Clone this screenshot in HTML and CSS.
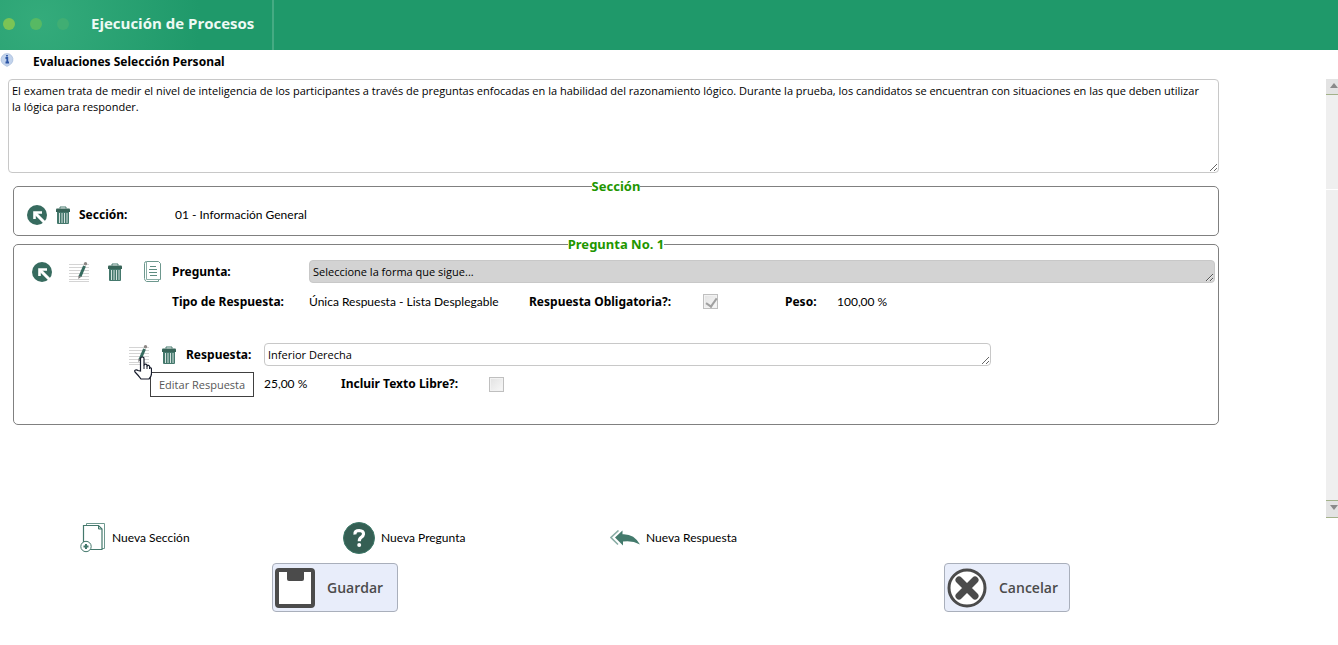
FILE: index.html
```html
<!DOCTYPE html>
<html lang="es">
<head>
    <meta charset="UTF-8">
    <meta name="viewport" content="width=device-width, initial-scale=1.0">
    <title>Ejecución de Procesos</title>
    <link rel="stylesheet" href="styles.css">
</head>
<body>
    <!-- Shared icons -->
    <svg class="icon-defs" aria-hidden="true">
        <symbol id="icon-up" viewBox="0 0 20 20">
            <circle cx="10" cy="10" r="10" fill="#376b5f"/>
            <path d="M7.500 14V7.500h7.500" fill="none" stroke="#fff" stroke-width="2.600"/>
            <path d="M8 8l9.500 9.500" stroke="#fff" stroke-width="3"/>
        </symbol>
        <symbol id="icon-trash" viewBox="0 0 14 18">
            <path d="M4 2.500V1h6v1.500" fill="none" stroke="#44786c" stroke-width="1"/>
            <path d="M0 3.500Q0 2.500 1 2.500h12q1 0 1 1V6H0z" fill="#376458"/>
            <path d="M1 6h12v11q0 1-1 1H2q-1 0-1-1z" fill="#44786c"/>
            <path d="M3.500 7v10M6 7v10M8.500 7v10M11 7v10" stroke="#d5e3df" stroke-width="1"/>
        </symbol>
        <symbol id="icon-edit" viewBox="0 0 20 20">
            <path d="M0 2.500h20M0 5.500h20M0 8.500h20M0 11.500h20M0 14.500h20M0 17.500h20M0 19.500h20" stroke="#d4d4d4" stroke-width="1"/>
            <path d="M15.500 4L11 14.500" stroke="#376b5f" stroke-width="3"/>
            <path d="M9.500 13.500l2.800 1.200L9.300 17z" fill="#777"/>
            <circle cx="16.500" cy="1.800" r="1.700" fill="#8c8785"/>
        </symbol>
        <symbol id="icon-doc" viewBox="0 0 17 21">
            <path d="M2.500.500h12l2 2v16h-2v2h-12q-2-1-2-3v-15q0-2 2-2z" fill="#fff" stroke="#6d988e"/>
            <path d="M2.500 1v17.500H16" fill="none" stroke="#8aada5"/>
            <path d="M6 5.500h6M5 8.500h8M5 11.500h8M6 14.500h7" stroke="#5e8c81"/>
        </symbol>
    </svg>

    <header class="top-bar">
        <span class="dot"></span>
        <span class="dot dot-soft"></span>
        <span class="dot dot-faint"></span>
        <h1>Ejecución de Procesos</h1>
    </header>

    <div class="page-title">
        <svg width="14" height="14" viewBox="0 0 14 14" aria-hidden="true">
            <path d="M7 13.500L4.500 12A6 6 0 1 1 9.500 12z" fill="#c2d3ec" stroke="#a3b8d8" stroke-width=".6"/>
            <path d="M7 2v1.500M5.500 5h1.800v4.500M5.500 9.500h3.500" fill="none" stroke="#2c55a4" stroke-width="1.800"/>
        </svg>
        <h2>Evaluaciones Selección Personal</h2>
    </div>

    <div class="viewer">
        <main class="form">
            <textarea class="description" aria-label="Descripción">El examen trata de medir el nivel de inteligencia de los participantes a través de preguntas enfocadas en la habilidad del razonamiento lógico. Durante la prueba, los candidatos se encuentran con situaciones en las que deben utilizar la lógica para responder.</textarea>

            <fieldset class="group">
                <legend>Sección</legend>
                <div class="row section-row">
                    <button type="button" class="icon-btn" aria-label="Subir"><svg width="20" height="20"><use href="#icon-up"/></svg></button>
                    <button type="button" class="icon-btn" aria-label="Eliminar"><svg width="14" height="18"><use href="#icon-trash"/></svg></button>
                    <strong class="section-label">Sección:</strong>
                    <span>01 - Información General</span>
                </div>
            </fieldset>

            <fieldset class="group question">
                <legend>Pregunta No. 1</legend>
                <div class="row question-row">
                    <div class="tools">
                        <button type="button" class="icon-btn" aria-label="Subir"><svg width="20" height="20"><use href="#icon-up"/></svg></button>
                        <button type="button" class="icon-btn" aria-label="Editar Pregunta"><svg width="20" height="20"><use href="#icon-edit"/></svg></button>
                        <button type="button" class="icon-btn" aria-label="Eliminar"><svg width="14" height="18"><use href="#icon-trash"/></svg></button>
                        <button type="button" class="icon-btn" aria-label="Detalle"><svg width="17" height="21"><use href="#icon-doc"/></svg></button>
                    </div>
                    <label for="pregunta">Pregunta:</label>
                    <textarea id="pregunta" class="line locked" readonly>Seleccione la forma que sigue...</textarea>
                </div>
                <div class="row details-row">
                    <strong>Tipo de Respuesta:</strong>
                    <span>Única Respuesta - Lista Desplegable</span>
                    <label for="obligatoria">Respuesta Obligatoria?:</label>
                    <input type="checkbox" id="obligatoria" checked disabled>
                    <strong>Peso:</strong>
                    <span>100,00 %</span>
                </div>

                <div class="row answer-row">
                    <button type="button" class="icon-btn edit-answer" aria-describedby="tip">
                        <svg width="20" height="20"><use href="#icon-edit"/></svg>
                        <svg class="pointer" width="18" height="24" viewBox="0 0 18 24">
                            <path d="M6.500 15V3q0-2 1.800-2T10 3v6.500q0-1.500 1.500-1.300t1.500 1.300v1q.2-1.200 1.500-1t1.200 1.500v1q1.800-.8 1.800 1.500v4q0 3-2.500 5.500H7Q4.500 19.500 1 16q-.8-1.500.5-2t2.500.500z" fill="#fff" stroke="#161b2b" stroke-width="1.200"/>
                            <path d="M10 9v4M13 10v3M15.500 11.500V13" stroke="#161b2b"/>
                        </svg>
                        <span class="tooltip" id="tip" role="tooltip">Editar Respuesta</span>
                    </button>
                    <button type="button" class="icon-btn" aria-label="Eliminar"><svg width="14" height="18"><use href="#icon-trash"/></svg></button>
                    <label for="respuesta">Respuesta:</label>
                    <textarea id="respuesta" class="line">Inferior Derecha</textarea>
                </div>
                <div class="row weight-row">
                    <span>25,00 %</span>
                    <label for="libre">Incluir Texto Libre?:</label>
                    <input type="checkbox" id="libre" disabled>
                </div>
            </fieldset>
        </main>

        <div class="scroll">
            <button type="button" class="scroll-btn" aria-label="Subir página"><svg width="8" height="5"><path d="M0 5l4-5 4 5z" fill="#8a8a8a"/></svg></button>
            <div class="scroll-thumb"></div>
            <div class="scroll-track"></div>
            <button type="button" class="scroll-btn scroll-down" aria-label="Bajar página"><svg width="8" height="5"><path d="M0 0h8L4 5z" fill="#8a8a8a"/></svg></button>
        </div>
    </div>

    <nav class="links">
        <a href="#">
            <svg width="26" height="30" viewBox="0 0 26 30" aria-hidden="true">
                <path d="M6.500 2.500v-2h18v25h-3" fill="#fff" stroke="#6d988e"/>
                <path d="M3.500 2.500h15l3.500 3.500v20.500H3.500z" fill="#fff" stroke="#44786c" stroke-width="1.200"/>
                <path d="M18.500 2.500V6H22z" fill="#b5cbc6" stroke="#44786c"/>
                <circle cx="6" cy="23.500" r="5.200" fill="#fff" stroke="#44786c"/>
                <path d="M3.500 23.500h5M6 21v5" stroke="#44786c" stroke-width="2"/>
            </svg>
            Nueva Sección
        </a>
        <a href="#">
            <svg width="32" height="32" viewBox="0 0 32 32" aria-hidden="true">
                <circle cx="16" cy="16" r="15.500" fill="#355f54" stroke="#3d7868"/>
                <path d="M12 12.500q-.5-4 4.200-4 4.500.2 4.300 3.600-.2 2-2.300 3.200-2 1.200-1.900 4" fill="none" stroke="#fff" stroke-width="3.200"/>
                <circle cx="16.200" cy="23" r="2" fill="#fff"/>
            </svg>
            Nueva Pregunta
        </a>
        <a href="#">
            <svg width="30" height="16" viewBox="0 0 30 16" aria-hidden="true">
                <path d="M5 7.500L12.500.500v3.700Q24 3.500 30 14.500 22 10 13 11.500v4z" fill="#437a6c"/>
                <path d="M8.500.500L1 7.500l7 7" fill="none" stroke="#8aada5" stroke-width="1.600"/>
            </svg>
            Nueva Respuesta
        </a>
    </nav>

    <div class="actions">
        <button type="button" class="action">
            <svg width="40" height="40" viewBox="0 0 40 40" aria-hidden="true">
                <rect x="2" y="2" width="36" height="36" rx="2" fill="#fff" stroke="#4b4b4b" stroke-width="4"/>
                <path d="M12 3h17v8q0 2-2 2H14q-2 0-2-2z" fill="#4b4b4b"/>
            </svg>
            Guardar
        </button>
        <button type="button" class="action">
            <svg width="40" height="40" viewBox="0 0 40 40" aria-hidden="true">
                <circle cx="20" cy="20" r="18" fill="#fff" stroke="#4b4b4b" stroke-width="3"/>
                <path d="M12 12l16 16M28 12L12 28" stroke="#4b4b4b" stroke-width="7" stroke-linecap="round"/>
            </svg>
            Cancelar
        </button>
    </div>
</body>
</html>
```
FILE: styles.css
```css
:root {
    --green: #1f996a;
    --legend: #1e9600;
    --line: #808080;
    --soft-line: #c8c8c8;
    --ui-font: Lato, sans-serif;
    --field-font: "Open Sans", sans-serif;
    --label-font: "Noto Sans", "Open Sans", sans-serif;
}

* {
    box-sizing: border-box;
}

body {
    margin: 0;
    background: #fff;
    color: #000;
    font-family: var(--ui-font);
    font-size: 12px;
    line-height: 16px;
}

button,
textarea {
    font: inherit;
    color: inherit;
}

h1,
h2 {
    margin: 0;
    font-family: var(--label-font);
}

label,
strong,
legend {
    font-family: var(--label-font);
    font-weight: bold;
}

svg {
    display: block;
    flex: none;
}

.icon-defs {
    position: absolute;
    width: 0;
    height: 0;
}

/* Header */
.top-bar {
    display: flex;
    align-items: center;
    gap: 15px;
    height: 50px;
    padding: 0 0 2px 3px;
    background:
        linear-gradient(#45ab83, #45ab83) 272px 0 / 2px 100% no-repeat,
        radial-gradient(circle at 40px 20px, #34ab7b, var(--green) 160px);
}

.top-bar h1 {
    margin-left: 7px;
    color: #eefaf4;
    font-family: var(--field-font);
    font-size: 15px;
    line-height: 20px;
    padding-bottom: 2px;
}

.dot {
    width: 12px;
    height: 12px;
    border-radius: 50%;
    background: #7bc455;
}

.dot-soft {
    background: #57b963;
}

.dot-faint {
    background: #40ae73;
}

.page-title {
    display: flex;
    gap: 19px;
    height: 29px;
    padding-top: 3px;
}

.page-title h2 {
    font-size: 12px;
    line-height: 18px;
}

/* Scrolling form */
.viewer {
    display: flex;
    height: 439px;
}

.form {
    flex: 1;
    padding: 0 107px 0 8px;
}

textarea {
    display: block;
    margin: 0;
    padding: 3px 8px 3px 3px;
    border: 1px solid var(--soft-line);
    border-radius: 4px;
    background: #fff;
    font-family: var(--field-font);
    font-size: 11px;
    overflow: hidden;
}

.description {
    width: 100%;
    height: 94px;
}

.line {
    flex: 1;
    height: 23px;
}

.locked {
    background: #d3d3d3;
}

.group {
    min-width: 0;
    margin: 5px 0 0 5px;
    padding: 0 3px;
    border: 1px solid var(--line);
    border-radius: 5px;
}

.group + .group {
    margin-top: 0;
}

.group legend {
    margin: 0 auto;
    padding: 0;
    color: var(--legend);
    font-size: 13px;
    line-height: 16px;
}

.row {
    display: flex;
    align-items: center;
    margin-left: 9px;
}

.section-row {
    gap: 9px;
    height: 41px;
    padding-left: 1px;
}

.section-label {
    width: 87px;
}

.question {
    height: 189px;
}

.question-row {
    height: 39px;
}

.tools {
    display: grid;
    grid-template-columns: 37px 39px 36px auto;
    align-items: center;
    justify-items: start;
    width: 146px;
    padding-left: 6px;
}

.question-row label {
    width: 137px;
}

.details-row {
    display: grid;
    grid-template-columns: 137px 220px 174px 82px 52px auto;
    justify-content: start;
    height: 21px;
    padding-left: 146px;
}

.answer-row {
    height: 23px;
    margin-top: 31px;
    padding: 0 224px 0 103px;
}

.answer-row .icon-btn + .icon-btn {
    margin: 0 10px 0 13px;
}

.answer-row label {
    width: 78px;
}

.weight-row {
    display: grid;
    grid-template-columns: 77px 148px auto;
    justify-content: start;
    height: 36px;
    padding-left: 238px;
}

.icon-btn {
    flex: none;
    padding: 0;
    border: 0;
    background: none;
    cursor: pointer;
}

input[type="checkbox"] {
    appearance: none;
    width: 15px;
    height: 15px;
    margin: 0;
    border: 1px solid #bfbfbf;
    background: linear-gradient(135deg, #e2e2e2, #f8f8f8);
    box-shadow: inset 0 0 0 1px #f2f2f2;
}

input[type="checkbox"]:checked::before {
    content: "";
    display: block;
    width: 5px;
    height: 9px;
    margin: 1px 0 0 4px;
    border: solid #a0a0a0;
    border-width: 0 2px 2px 0;
    transform: rotate(35deg);
}

/* Hovered edit icon */
.edit-answer {
    position: relative;
}

.pointer {
    position: absolute;
    top: 11px;
    left: 5px;
    z-index: 2;
}

.tooltip {
    position: absolute;
    top: 27px;
    left: 21px;
    z-index: 1;
    padding: 4px 8px 3px;
    border: 1px solid #404040;
    background: #fff;
    color: #575757;
    font-family: var(--field-font);
    font-size: 11px;
    white-space: nowrap;
}

/* Side scrollbar */
.scroll {
    display: flex;
    flex-direction: column;
    width: 12px;
    overflow: hidden;
}

.scroll-btn {
    display: flex;
    align-items: center;
    height: 16px;
    padding: 0 0 3px 4px;
    border: 0;
    border-bottom: 1px solid #a3b18a;
    background: #e3e3e3;
}

.scroll-down {
    height: 18px;
    border-top: 1px solid #a3b18a;
}

.scroll-thumb {
    height: 94px;
    margin-bottom: 1px;
    background: #efefef;
}

.scroll-track {
    flex: 1;
    background: #efefef;
}

/* Footer */
.links {
    display: grid;
    grid-template-columns: 263px 267px auto;
    justify-content: start;
    align-items: center;
    height: 40px;
    padding-left: 80px;
}

.links a {
    display: flex;
    align-items: center;
    gap: 6px;
    color: #000;
    text-decoration: none;
}

.actions {
    display: grid;
    grid-template-columns: 1fr 1fr;
    column-gap: 10px;
    justify-items: center;
    padding: 5px 0 0 4px;
}

.action {
    display: flex;
    align-items: center;
    gap: 12px;
    width: 126px;
    height: 49px;
    padding: 0 2px;
    border: 1px solid #a9afbb;
    border-radius: 4px;
    background: #e8edfa;
    color: #4b4b4b;
    font-family: var(--field-font);
    font-size: 14px;
    font-weight: 600;
    cursor: pointer;
}
```
